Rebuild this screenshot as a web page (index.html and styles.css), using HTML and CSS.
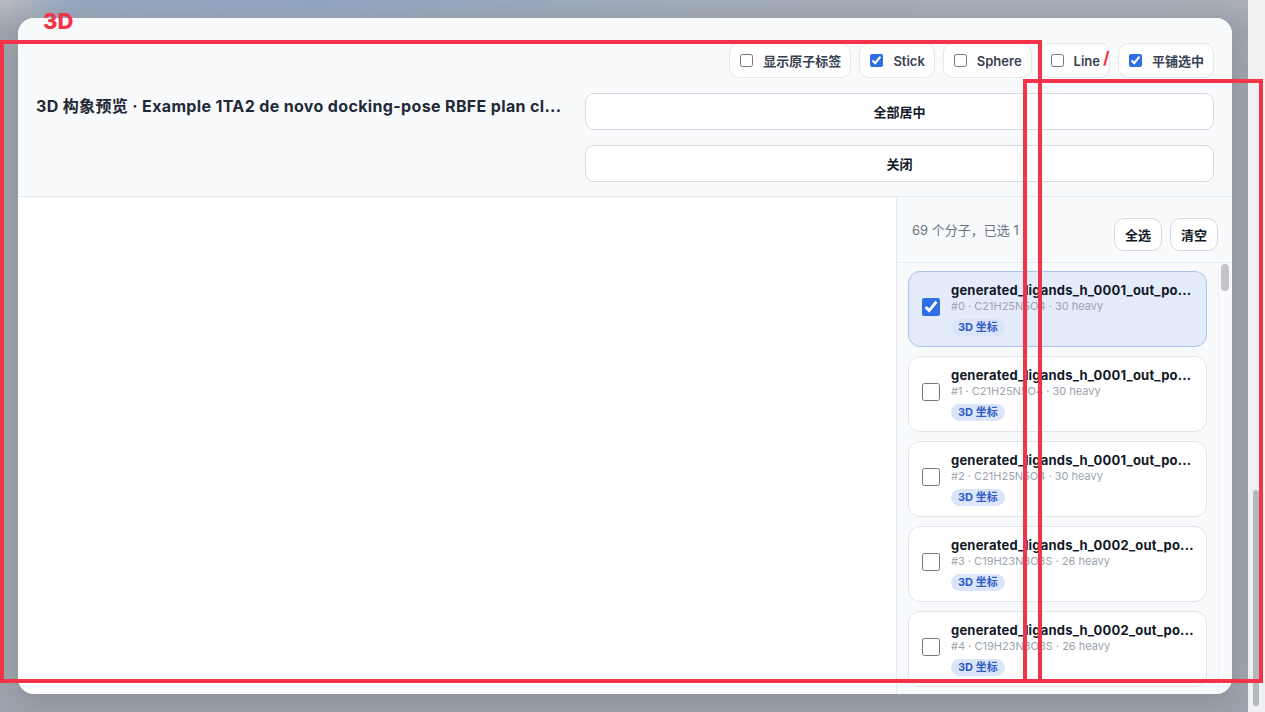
FILE: index.html
```html
<!DOCTYPE html>
<html lang="zh-CN">
<head>
  <meta charset="UTF-8" />
  <meta name="viewport" content="width=device-width, initial-scale=1" />
  <title>3D 构象预览</title>
  <link rel="stylesheet" href="styles.css">
</head>
<body>
<div class="backdrop">
  <div class="modal">
    <header class="modal-head">
      <h2 class="modal-title">3D 构象预览 · Example 1TA2 de novo docking-pose RBFE plan cl...</h2>
      <div class="head-controls">
        <div class="toggles">
          <label class="toggle"><input type="checkbox"> 显示原子标签</label>
          <label class="toggle"><input type="checkbox" checked> Stick</label>
          <label class="toggle"><input type="checkbox"> Sphere</label>
          <label class="toggle"><input type="checkbox"> Line</label>
          <label class="toggle"><input type="checkbox" checked> 平铺选中</label>
        </div>
        <button class="wide-btn">全部居中</button>
        <button class="wide-btn">关闭</button>
      </div>
    </header>

    <div class="modal-body">
      <div class="viewer" id="viewer"></div>
      <aside class="side">
        <div class="side-head">
          <span class="side-count" id="side-count">69 个分子，已选 1</span>
          <div class="side-actions">
            <button class="mini-btn">全选</button>
            <button class="mini-btn">清空</button>
          </div>
        </div>
        <div class="side-scroll">
          <div class="side-list" id="mol-list"></div>
          <div class="list-track"><div class="list-thumb"></div></div>
        </div>
      </aside>
    </div>
  </div>
</div>
<div class="page-scroll"><div class="page-thumb"></div></div>

<!-- review marks -->
<div class="mark-label">3D</div>
<div class="mark-box mark-a"></div>
<div class="mark-box mark-b"></div>
<div class="mark-slash">/</div>

<script>
  const listDiv = document.getElementById('mol-list');
  const molecules = [
    { file: '0001', formula: 'C21H25N5O4', heavy: 30 },
    { file: '0001', formula: 'C21H25N5O4', heavy: 30 },
    { file: '0001', formula: 'C21H25N5O4', heavy: 30 },
    { file: '0002', formula: 'C19H23N3O3S', heavy: 26 },
    { file: '0002', formula: 'C19H23N3O3S', heavy: 26 }
  ];
  const selected = [0];

  function renderList() {
    listDiv.innerHTML = '';
    molecules.forEach((m, i) => {
      const on = selected.includes(i);
      const row = document.createElement('label');
      row.className = 'mol-item' + (on ? ' is-on' : '');
      row.innerHTML = `
        <input type="checkbox" ${on ? 'checked' : ''}>
        <div class="mol-info">
          <div class="mol-name">generated_ligands_h_${m.file}_out_po...</div>
          <div class="mol-meta">#${i} · ${m.formula} · ${m.heavy} heavy</div>
          <span class="mol-tag">3D 坐标</span>
        </div>
      `;
      listDiv.appendChild(row);
    });
  }

  renderList();
</script>
</body>
</html>
```

FILE: styles.css
```css
* { box-sizing: border-box; }
body {
  margin: 0; height: 100vh; overflow: hidden; display: flex;
  font-family: Inter, "Noto Sans CJK SC", sans-serif; color: #1f2937;
  background:
    linear-gradient(to bottom, rgba(158,164,173,0) 0, #9ea4ad 30px),
    linear-gradient(90deg, #b9bcc2 0, #94a7c2 70px, #8ea5c5 320px, #a2acba 720px, #a9aeb6 1265px);
}
button { font-family: inherit; cursor: pointer; }
input[type="checkbox"] { margin: 0; accent-color: #2f6fe6; }

.backdrop { flex: 1; padding: 18px 16px 18px 18px; }
.modal {
  height: 676px; display: flex; flex-direction: column; background: #fff;
  border-radius: 16px; overflow: hidden; box-shadow: 0 10px 30px rgba(0,0,0,0.12);
}

/* header: title on the left, view toggles + actions on the right */
.modal-head {
  display: flex; align-items: center; gap: 22px; padding: 25px 18px 14px;
  background: #f8fafc; border-bottom: 1px solid #e6e9ee;
}
.modal-title {
  flex: 1; min-width: 0; margin: -16px 0 0; font-size: 16px; font-weight: 700; color: #1f2937;
  letter-spacing: 0.35px; white-space: nowrap; overflow: hidden; text-overflow: ellipsis;
}
.head-controls { width: 629px; display: flex; flex-direction: column; gap: 15px; }
.toggles { display: flex; justify-content: flex-end; gap: 8px; }
.toggle {
  height: 35px; display: flex; align-items: center; gap: 10px; padding: 0 9px 0 10px;
  background: #fff; border: 1px solid #e5e7eb; border-radius: 10px;
  font-size: 13px; font-weight: 600; color: #374151;
}
.toggle input { width: 13px; height: 13px; }
.wide-btn {
  height: 37px; background: #fff; border: 1px solid #d5d9df; border-radius: 9px;
  font-size: 13px; font-weight: 600; color: #111827;
}

.modal-body { flex: 1; display: flex; min-height: 0; }
.viewer { flex: 1; background: #fff; }

/* molecule picker */
.side {
  width: 336px; display: flex; flex-direction: column; min-height: 0;
  background: #f8fafc; border-left: 1px solid #e6e9ee;
}
.side-head {
  display: flex; justify-content: space-between; align-items: flex-start;
  padding: 21px 14px 11px 15px; border-bottom: 1px solid #e7ecf2;
}
.side-count { font-size: 13px; color: #6b7280; padding-top: 2px; }
.side-actions { display: flex; gap: 8px; }
.mini-btn {
  height: 33px; padding: 0 10px; background: #fff; border: 1px solid #d5d9df;
  border-radius: 10px; font-size: 13px; font-weight: 600; color: #111827;
}
.side-scroll { flex: 1; min-height: 0; display: flex; }
.side-list {
  flex: 1; min-width: 0; overflow: hidden; padding: 8px 11px;
  display: flex; flex-direction: column; gap: 9px;
}
.list-track { width: 14px; background: #f9fafb; border-left: 1px solid #eef0f3; padding: 1px 3px 0 2px; }
.list-thumb { height: 27px; border-radius: 4px; background: #c3c5c9; }

.mol-item {
  flex-shrink: 0; height: 76px; display: flex; align-items: center; gap: 11px;
  padding: 11px 12px 11px 13px; background: #fff; border: 1px solid #e1e5eb; border-radius: 12px;
}
.mol-item.is-on { background: #e4ecfb; border-color: #aac2ee; }
.mol-item input { width: 18px; height: 18px; flex-shrink: 0; margin-top: -5px; }
.mol-info { min-width: 0; flex: 1; display: flex; flex-direction: column; align-items: flex-start; }
.mol-name {
  width: 100%; font-size: 13px; font-weight: 700; color: #111827; line-height: 16px;
  letter-spacing: 0.2px; white-space: nowrap; overflow: hidden; text-overflow: ellipsis;
}
.mol-meta { font-size: 11px; color: #9ca3af; line-height: 14px; margin-top: 1px; }
.mol-tag {
  margin-top: 6px; height: 17px; line-height: 17px; padding: 0 7px; border-radius: 9px;
  background: #dbe5fa; color: #2f5bc4; font-size: 11px; font-weight: 700;
}

/* page scrollbar behind the dialog */
.page-scroll { width: 17px; background: #eef0f2; padding: 490px 0 0 5px; }
.page-thumb { width: 6px; height: 216px; border-radius: 3px; background: #b4b7bc; }

/* red review marks drawn over the page */
.mark-box { position: absolute; border: 4px solid #f2334a; }
.mark-a { left: 0; top: 40px; width: 1042px; height: 643px; }
.mark-b { left: 1023px; top: 79px; width: 240px; height: 604px; }
.mark-label {
  position: absolute; left: 43px; top: 8px; font-family: Inter, sans-serif;
  font-size: 22px; font-weight: 800; color: #f2334a;
}
.mark-slash {
  position: absolute; left: 1103px; top: 48px; font-family: Inter, sans-serif;
  font-size: 17px; font-weight: 700; color: #f2334a;
}
```
